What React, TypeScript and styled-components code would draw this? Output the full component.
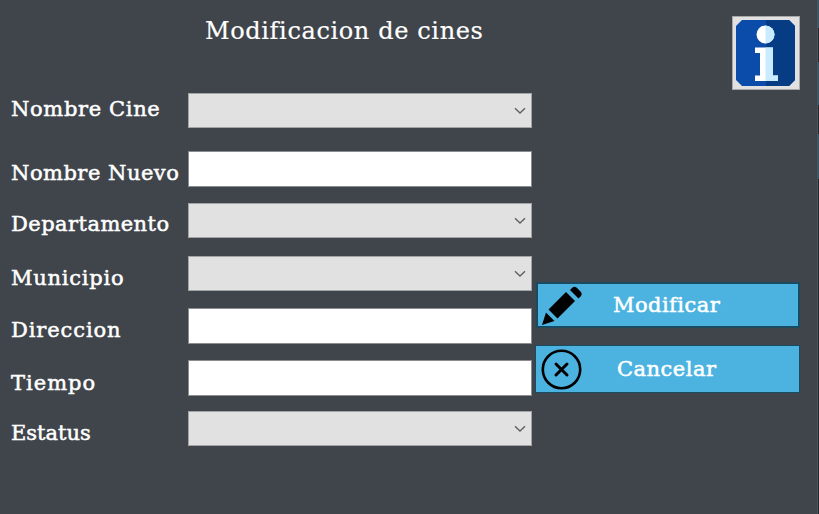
import React from "react";
import styled, { createGlobalStyle } from "styled-components";

const GlobalStyle = createGlobalStyle`
  * { box-sizing: border-box; }
  body { margin: 0; background: #40454b; overflow: hidden; }
`;

const Window = styled.main`
  display: flex;
  width: 819px;
  height: 514px;
  background:
    linear-gradient(
      #34566a 0 28px, #20282d 28px 62px, #34566a 62px 105px, #20282d 105px 134px,
      #34566a 134px 179px, #20282d 179px
    ) right / 1px 100% no-repeat,
    linear-gradient(#50545a, #50545a) right / 2px 100% no-repeat,
    #40454b;
  color: #fff;
  font-family: "DejaVu Serif", serif;
`;

const FormColumn = styled.form`
  width: 532px;
  flex: none;
`;

const Title = styled.h1<{ $tracking: number }>`
  margin: 0;
  height: 93px;
  padding: 16px 0 0 205px;
  font-size: 24px;
  line-height: 30px;
  font-weight: 400;
  white-space: nowrap;
  letter-spacing: ${(p) => p.$tracking}px;
  -webkit-text-stroke: 0.2px #fff;
`;

const Row = styled.div<{ $gap: number; $height: number }>`
  display: flex;
  height: ${(p) => p.$height}px;
  margin-bottom: ${(p) => p.$gap}px;
`;

const Label = styled.label<{ $drop: number; $tracking: number }>`
  width: 188px;
  flex: none;
  padding: ${(p) => p.$drop}px 0 0 11px;
  font-size: 21px;
  line-height: 26px;
  white-space: nowrap;
  letter-spacing: ${(p) => p.$tracking}px;
  -webkit-text-stroke: 0.5px #fff;
`;

const TextInput = styled.input`
  width: 344px;
  height: 100%;
  padding: 0 8px;
  border: 1px solid #8a8c8f;
  border-radius: 0;
  background: #fff;
  outline: none;
`;

const Combo = styled.button`
  display: flex;
  align-items: center;
  justify-content: flex-end;
  width: 344px;
  height: 100%;
  padding: 1px 5px 0 0;
  border: 1px solid #a3a4a6;
  background: #e1e1e1;
`;

const Side = styled.aside`
  display: flex;
  flex-direction: column;
  align-items: flex-end;
  width: 268px;
  padding-top: 16px;
`;

const InfoButton = styled.button`
  display: flex;
  width: 68px;
  height: 74px;
  margin-bottom: 192px;
  padding: 3px 2px 2px;
  border: 1px solid #a8a8a8;
  background: #e1e1e1;
`;

const Action = styled.button<{ $active?: boolean }>`
  display: flex;
  align-items: center;
  width: ${(p) => (p.$active ? 264 : 265)}px;
  height: ${(p) => (p.$active ? 46 : 48)}px;
  margin-bottom: 17px;
  padding: 0;
  border: ${(p) => (p.$active ? 2 : 1)}px solid #1b4b61;
  background: #4cb3e1;
  color: #fff;
  font: 21px/26px "DejaVu Serif", serif;
`;

const ActionIcon = styled.svg<{ $indent: number }>`
  flex: none;
  width: 42px;
  height: 42px;
  margin-left: ${(p) => p.$indent}px;
`;

const ActionText = styled.span<{ $indent: number; $tracking: number }>`
  margin-left: ${(p) => p.$indent}px;
  letter-spacing: ${(p) => p.$tracking}px;
  white-space: nowrap;
  -webkit-text-stroke: 0.5px #fff;
`;

const fields = [
  { name: "Nombre Cine", combo: true, height: 35, gap: 23, drop: 3, tracking: 0.65 },
  { name: "Nombre Nuevo", combo: false, height: 36, gap: 16, drop: 9, tracking: 0.5 },
  { name: "Departamento", combo: true, height: 35, gap: 18, drop: 8, tracking: 0.45 },
  { name: "Municipio", combo: true, height: 35, gap: 17, drop: 9, tracking: 0.75 },
  { name: "Direccion", combo: false, height: 36, gap: 16, drop: 9, tracking: 0.9 },
  { name: "Tiempo", combo: false, height: 36, gap: 15, drop: 10, tracking: 1.0 },
  { name: "Estatus", combo: true, height: 35, gap: 0, drop: 9, tracking: 0 },
];

const Chevron = () => (
  <svg width="12" height="8" viewBox="0 0 12 8" fill="none" stroke="#606060" strokeWidth="1.4">
    <path d="M1 1.3 6 6.1 11 1.3" />
  </svg>
);

const InfoSign = () => (
  <svg width="62" height="68" viewBox="0 0 62 68">
    <path d="M7 0H54L60 6V60L54 66H7L1 60V6Z" fill="#0b4cab" />
    <path d="M31 0H54L60 6V60L54 66H31Z" fill="#063c84" />
    <circle cx="30.500" cy="14.500" r="9" fill="#fff" />
    <path d="M30.500 5.500a9 9 0 0 1 0 18Z" fill="#c8ebff" />
    <path d="M20 27.500H38V55.500H43V61H20V55.500H25V33H20Z" fill="#fff" />
    <path d="M30.500 27.500H38V55.500H43V61H30.500Z" fill="#c8ebff" />
  </svg>
);

export default function App() {
  return (
    <>
      <GlobalStyle />
      <Window>
        <FormColumn>
          <Title $tracking={0.63}>Modificacion de cines</Title>
          {fields.map((f) => (
            <Row key={f.name} $height={f.height} $gap={f.gap}>
              <Label $drop={f.drop} $tracking={f.tracking}>{f.name}</Label>
              {f.combo ? (
                <Combo type="button" aria-label={f.name}><Chevron /></Combo>
              ) : (
                <TextInput aria-label={f.name} />
              )}
            </Row>
          ))}
        </FormColumn>
        <Side>
          <InfoButton aria-label="Info"><InfoSign /></InfoButton>
          <Action $active>
            <ActionIcon $indent={3} viewBox="0 0 42 42">
              <path d="M1 41 5 28.500 13.500 37Z" />
              <path d="M7.500 25.500 25 8 34 17 16.500 34.500Z" />
              <path d="M29 6 31.500 3.500Q33.500 2 35.500 3.500L40 8Q41.500 10 40 12L37.500 14.500Z" />
            </ActionIcon>
            <ActionText $indent={30} $tracking={0.45}>Modificar</ActionText>
          </Action>
          <Action>
            <ActionIcon $indent={5} viewBox="0 0 42 42" fill="none" stroke="#000">
              <circle cx="20.500" cy="21.500" r="18.700" strokeWidth="2.600" />
              <path d="M15 16 26 27M26 16 15 27" strokeWidth="3" strokeLinecap="round" />
            </ActionIcon>
            <ActionText $indent={34} $tracking={0.5}>Cancelar</ActionText>
          </Action>
        </Side>
      </Window>
    </>
  );
}
